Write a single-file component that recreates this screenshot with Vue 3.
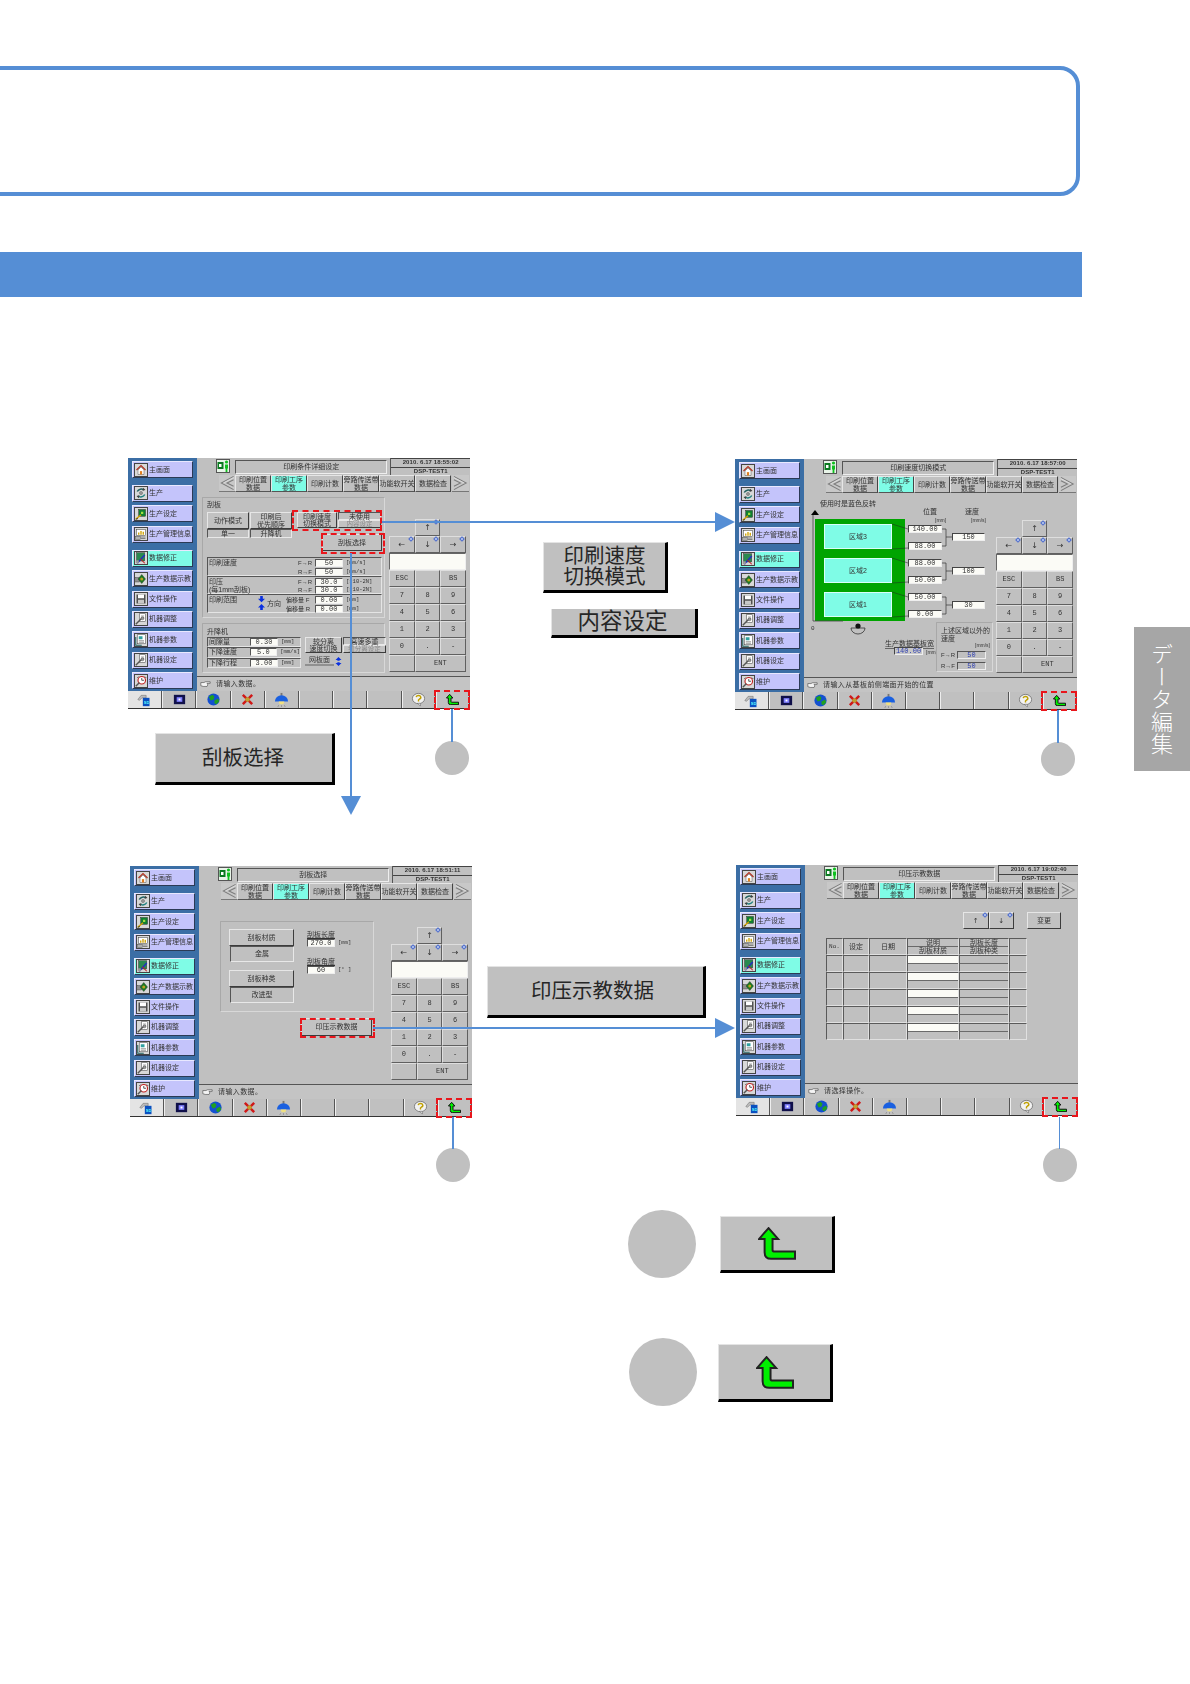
<script setup>
const sideItems = [
  { k: 'home', t: '主画面' },
  { k: 'cycle', t: '生产', sep: true },
  { k: 'chip', t: '生产设定' },
  { k: 'chart', t: '生产管理信息' },
  { k: 'edit', t: '数据修正', sep: true, on: true },
  { k: 'teach', t: '生产数据示教' },
  { k: 'disk', t: '文件操作' },
  { k: 'tool', t: '机器调整' },
  { k: 'sheet', t: '机器参数' },
  { k: 'tool', t: '机器设定' },
  { k: 'clock', t: '维护' }
]
const icons = {
  home: '<path d="M2 8 8 2l6 6" fill="none" stroke="#b03020" stroke-width="1.6"/><path d="M4 8v6h8V8L8 4z" fill="#fff" stroke="#555" stroke-width=".7"/><rect x="6.5" y="9.5" width="3" height="4.5" fill="#e08020"/>',
  cycle: '<path d="M3 6a6 6 0 0 1 9-2" fill="none" stroke="#206060" stroke-width="2"/><path d="M13 10a6 6 0 0 1-9 2" fill="none" stroke="#208080" stroke-width="2"/><path d="M11 1l3 3-4 1zM5 15l-3-3 4-1z" fill="#404040"/><circle cx="8" cy="8" r="2" fill="#a0a0a0" stroke="#444" stroke-width=".6"/>',
  chip: '<rect x="5" y="2" width="9" height="9" fill="#108030" stroke="#222" stroke-width=".6"/><rect x="8" y="5" width="3" height="3" fill="#a0e040"/><path d="M1 15l7-6" stroke="#d0a000" stroke-width="2"/><path d="M1 15l3-1" stroke="#222"/>',
  chart: '<rect x="2" y="2" width="12" height="8" fill="#fff" stroke="#444" stroke-width=".7"/><path d="M5 9V6M8 9V4M11 9V5" stroke="#d0a000" stroke-width="1.8"/><rect x="1" y="11" width="6" height="4" fill="#b0b0b0" stroke="#444" stroke-width=".6"/><path d="M8 12h6M8 14h6" stroke="#666"/>',
  edit: '<rect x="2" y="1" width="11" height="11" fill="#2a8a50" stroke="#333" stroke-width=".6"/><path d="M3 15 13 4" stroke="#2030c0" stroke-width="2"/><path d="M7 9l6 6" stroke="#c02020" stroke-width="1.4"/><rect x="1" y="11" width="4" height="4" fill="#999"/>',
  teach: '<rect x="1" y="6" width="5" height="6" fill="#909090" stroke="#333" stroke-width=".5"/><path d="M9 2 14 8 9 14 4 8z" fill="#1a7a20" stroke="#333" stroke-width=".6"/><circle cx="9" cy="8" r="2" fill="#c0a020"/>',
  disk: '<rect x="2" y="2" width="12" height="12" fill="#505050"/><rect x="4" y="2" width="8" height="5" fill="#fff"/><rect x="4" y="9" width="8" height="5" fill="#c8c8c8"/>',
  tool: '<rect x="6" y="1" width="8" height="10" fill="#fff" stroke="#444" stroke-width=".7"/><path d="M8 4h4M8 6h4" stroke="#888"/><path d="M1 15 9 7" stroke="#555" stroke-width="2"/><circle cx="10" cy="7" r="2" fill="#999" stroke="#333" stroke-width=".5"/>',
  sheet: '<rect x="3" y="1" width="11" height="12" fill="#fff" stroke="#444" stroke-width=".7"/><rect x="5" y="3" width="5" height="4" fill="#30a0a0"/><path d="M5 9h7M5 11h7" stroke="#777"/><path d="M1 4v11h8" fill="none" stroke="#206060" stroke-width="1.4"/>',
  clock: '<circle cx="9" cy="7" r="5" fill="#fff" stroke="#c02020" stroke-width="1.5"/><path d="M9 4v3h3" fill="none" stroke="#222"/><path d="M1 15l5-5" stroke="#555" stroke-width="2"/><path d="M5 2 3 4M13 2l2 2" stroke="#333"/>'
}
const tabs = [
  ['印刷位置', '数据'], ['印刷工序', '参数'], ['印刷计数'], ['旁路传送带', '数据'], ['功能软开关'], ['数据检查']
]
const keys = [
  { t: '', blank: true }, { t: '↑', d: true, arrow: true }, { t: '', blank: true },
  { t: '←', d: true, arrow: true }, { t: '↓', d: true, arrow: true }, { t: '→', d: true, arrow: true },
  { t: '', disp: true },
  { t: 'ESC' }, { t: '' }, { t: 'BS' },
  { t: '7' }, { t: '8' }, { t: '9' },
  { t: '4' }, { t: '5' }, { t: '6' },
  { t: '1' }, { t: '2' }, { t: '3' },
  { t: '0' }, { t: '.' }, { t: '-' },
  { t: '' }, { t: 'ENT', wide: true }
]
const screens = [
  { id: 's1', kind: 'cond', title: '印刷条件详细设定', date: '2010. 6.17 18:55:02', msg: '请输入数据。' },
  { id: 's2', kind: 'speed', title: '印刷速度切换模式', date: '2010. 6.17 18:57:00', msg: '请输入从基板前侧端面开始的位置' },
  { id: 's3', kind: 'blade', title: '刮板选择', date: '2010. 6.17 18:51:11', msg: '请输入数据。' },
  { id: 's4', kind: 'press', title: '印压示教数据', date: '2010. 6.17 19:02:40', msg: '请选择操作。' }
]
const zones = [
  { n: '区域3', a: '140.00', b: '88.00', s: '150', top: 31 },
  { n: '区域2', a: '88.00', b: '50.00', s: '100', top: 65 },
  { n: '区域1', a: '50.00', b: '0.00', s: '30', top: 99 }
]
const rows = [1, 2, 3, 4, 5]
const lines = [
  'hline l1', 'vline l2', 'vline l3', 'vline l4', 'hline l5', 'vline l6', 'vline l7'
]
</script>

<template>
  <div class="page">
    <div class="frame"></div>
    <div class="banner"></div>

    <div v-for="s in screens" :key="s.id" class="screen" :class="s.id">
      <aside class="side">
        <div v-for="(it, i) in sideItems" :key="i" class="sbtn" :class="{ sep: it.sep, on: it.on }">
          <svg class="sico" viewBox="0 0 16 16" v-html="icons[it.k]"></svg>
          <span>{{ it.t }}</span>
        </div>
      </aside>

      <main class="right">
        <header class="head">
          <svg class="door" viewBox="0 0 14 14">
            <rect x=".5" y=".5" width="13" height="13" fill="#e8f4e8" stroke="#555"/>
            <rect x="1.5" y="3" width="6" height="7" fill="#0a7a20"/>
            <rect x="3" y="5" width="2.5" height="3" fill="#fff"/>
            <circle cx="10.5" cy="3" r="1.6" fill="#10c020"/>
            <path d="M9 5.5h3v4h-.6V13h-1.8V9.5H9z" fill="#10c020"/>
          </svg>
          <div class="title">{{ s.title }}</div>
          <div class="stamp">
            <div>{{ s.date }}</div>
            <div>DSP-TEST1</div>
          </div>
        </header>
        <nav class="tabs">
          <svg class="chev" viewBox="0 0 16 17"><path d="M15 1.500 2 8.500 15 15.500M15 5 8 8.500 15 12" fill="none" stroke="#7c7c7c" stroke-width="1.100"/><path d="M15 2.800 4 8.500" stroke="#eee" stroke-width=".6"/></svg>
          <div v-for="(t, i) in tabs" :key="i" class="tab" :class="{ on: i === 1 }">
            <span v-for="l in t" :key="l">{{ l }}</span>
          </div>
          <svg class="chev end" viewBox="0 0 16 17"><path d="M1 1.500 14 8.500 1 15.500M1 5 8 8.500 1 12" fill="none" stroke="#7c7c7c" stroke-width="1.100"/><path d="M1 2.800 12 8.500" stroke="#eee" stroke-width=".6"/></svg>
        </nav>

        <section class="body">
          <!-- screen 1 -->
          <div v-if="s.kind === 'cond'" class="content">
            <div class="panel p1">
              <div class="ptitle">刮板</div>
              <div class="p1top">
                <div class="stack">
                  <div class="btn b42">动作模式</div>
                  <div class="val">单一</div>
                </div>
                <div class="stack">
                  <div class="btn b42 two"><span>印刷后</span><span>优先顺序</span></div>
                  <div class="val">升降机</div>
                </div>
                <div class="redgroup">
                  <div class="pair">
                    <div class="btn b40 two"><span>印刷速度</span><span>切换模式</span></div>
                    <div class="stack narrow">
                      <div class="val flat">未使用</div>
                      <div class="btn half off">内容设定</div>
                    </div>
                  </div>
                  <div class="dash d1"></div>
                  <div class="btn bselect">刮板选择<span class="dash d2"></span></div>
                </div>
              </div>
              <div class="ctable">
                <div class="crow">
                  <div class="clabel">印刷速度</div>
                  <div class="cvals">
                    <div class="cval"><i>F→R</i><b>50</b><em>[mm/s]</em></div>
                    <div class="cval"><i>R→F</i><b>50</b><em>[mm/s]</em></div>
                  </div>
                </div>
                <div class="crow">
                  <div class="clabel">印压<br>(每1mm刮板)</div>
                  <div class="cvals">
                    <div class="cval"><i>F→R</i><b>30.0</b><em>[×10-2N]</em></div>
                    <div class="cval"><i>R→F</i><b>30.0</b><em>[×10-2N]</em></div>
                  </div>
                </div>
                <div class="crow">
                  <div class="clabel">印刷范围</div>
                  <svg class="updown" viewBox="0 0 8 16"><path d="M2.5 0h3v3H8L4 7 0 3h2.500zM4 9l4 4H5.500v3h-3v-3H0z" fill="#0a30e0"/></svg>
                  <div class="dir">方向</div>
                  <div class="cvals">
                    <div class="cval"><i class="wide">偏移量 F</i><b>0.00</b><em>[mm]</em></div>
                    <div class="cval"><i class="wide">偏移量 R</i><b>0.00</b><em>[mm]</em></div>
                  </div>
                </div>
              </div>
            </div>
            <div class="panel p2">
              <div class="ptitle2">升降机</div>
              <div class="p2row">
                <div class="lift">
                  <div class="lrow"><span>间隙量</span><b>0.30</b><em>[mm]</em></div>
                  <div class="lrow"><span>下降速度</span><b>5.0</b><em>[mm/s]</em></div>
                  <div class="lrow"><span>下降行程</span><b>3.00</b><em>[mm]</em></div>
                </div>
                <div class="liftr">
                  <div class="pair">
                    <div class="btn b37 two"><span>较分离</span><span>速度切换</span></div>
                    <div class="stack narrow">
                      <div class="val flat">高速多重</div>
                      <div class="btn half off">缝分离设定</div>
                    </div>
                  </div>
                  <div class="mesh">
                    <div class="meshl">网板面</div>
                    <svg class="updown small" viewBox="0 0 8 12"><path d="M4 0l4 4H5.500v1h-3V4H0zM2.500 7h3v1H8l-4 4-4-4h2.500z" fill="#0a30e0"/></svg>
                  </div>
                </div>
              </div>
            </div>
          </div>

          <!-- screen 2 -->
          <div v-else-if="s.kind === 'speed'" class="canvas">
            <div class="lbl l-use">使用时是蓝色反转</div>
            <div class="lbl l-pos">位置</div>
            <div class="lbl l-pos2">[mm]</div>
            <div class="lbl l-spd">速度</div>
            <div class="lbl l-spd2">[mm/s]</div>
            <svg class="wires" viewBox="0 0 192 183">
              <path d="M7 22 11 17l4 5z" fill="#000"/>
              <path d="M9 22v106M9 128h30" stroke="#444" stroke-width=".8" fill="none"/>
              <g stroke="#222" stroke-width=".5" fill="none">
                <path d="M88 31l16 5M88 56l16 -1M88 65l16 5M88 90l16 -1M88 99l16 5M88 124l16 -1"/>
                <path d="M138 36h4v17h-4M142 44h6M138 70h4v17h-4M142 78h6M138 104h4v17h-4M142 112h6" stroke="#333" stroke-width=".7"/>
              </g>
              <path d="M47 135a7 6 0 0 0 14 0z" fill="none" stroke="#333" stroke-width=".8"/>
              <circle cx="54" cy="133" r="2.600" fill="#111"/>
              <text x="7" y="137" font-size="6" fill="#333" font-family="Liberation Mono">0</text>
            </svg>
            <div class="greenblock"></div>
            <template v-for="z in zones" :key="z.n">
              <div class="zone" :style="{ top: z.top + 'px' }">{{ z.n }}</div>
              <div class="zin" :style="{ top: z.top + 1 + 'px' }">{{ z.a }}</div>
              <div class="zin" :style="{ top: z.top + 18 + 'px' }">{{ z.b }}</div>
              <div class="zsp" :style="{ top: z.top + 9 + 'px' }">{{ z.s }}</div>
            </template>
            <div class="lbl l-w">生产数据基板宽</div>
            <div class="zin blue w2">140.00</div>
            <div class="lbl l-wm">[mm]</div>
            <div class="panel outer">
              <div class="outerT">上述区域以外的<br>速度</div>
              <div class="outerU">[mm/s]</div>
              <div class="orow"><i>F→R</i><b>50</b></div>
              <div class="orow"><i>R→F</i><b>50</b></div>
            </div>
          </div>

          <!-- screen 3 -->
          <div v-else-if="s.kind === 'blade'" class="content">
            <div class="panel bladeP">
              <div class="bcol">
                <div class="btn bw">刮板材质</div>
                <div class="val bv">金属</div>
                <div class="btn bw gaptop">刮板种类</div>
                <div class="val bv">改进型</div>
              </div>
              <div class="bright">
                <div class="u">刮板长度</div>
                <div class="bin"><b>270.0</b><em>[mm]</em></div>
                <div class="u mt">刮板角度</div>
                <div class="bin"><b>60</b><em>[° ]</em></div>
              </div>
            </div>
            <div class="btn bpress">印压示教数据<span class="dash d3"></span></div>
          </div>

          <!-- screen 4 -->
          <div v-else class="content4">
            <div class="topbtns">
              <div class="btn hk">↑<span class="dia"></span></div>
              <div class="btn hk">↓<span class="dia"></span></div>
              <div class="btn hchg">变更</div>
            </div>
            <div class="tbl">
              <div class="tc th c1">No.</div>
              <div class="tc th c2">设定</div>
              <div class="tc th c3">日期</div>
              <div class="tc c4 split"><span>说明</span><span>刮板材质</span></div>
              <div class="tc c5 split"><span>刮板长度</span><span>刮板种类</span></div>
              <div class="tc c6"></div>
              <template v-for="r in rows" :key="r">
                <div class="tc c1"></div>
                <div class="tc c2"></div>
                <div class="tc c3"></div>
                <div class="tc c4 split"><span class="white"></span><span></span></div>
                <div class="tc c5 split"><span></span><span></span></div>
                <div class="tc c6"></div>
              </template>
            </div>
          </div>

          <div v-if="s.kind !== 'press'" class="keypad">
            <div v-for="(k, i) in keys" :key="i" class="key"
              :class="{ blank: k.blank, disp: k.disp, wide: k.wide, arrow: k.arrow }">
              {{ k.t }}<span v-if="k.d" class="dia"></span>
            </div>
          </div>
        </section>

        <div class="msg">
          <svg class="hand" viewBox="0 0 14 9"><path d="M1 2h4l2-1h6v2H9l1 2-1 2H4L1 6z" fill="#f4f4f4" stroke="#333" stroke-width=".7"/></svg>
          <span>{{ s.msg }}</span>
        </div>
      </main>

      <footer class="bar">
        <div class="cell first">
          <svg viewBox="0 0 18 16" class="bico">
            <path d="M1 8 5 3h6v3H6L3 9z" fill="#bbb" stroke="#555" stroke-width=".5"/>
            <rect x="7" y="6" width="8" height="10" fill="#0a50c0"/>
            <text x="8" y="14" font-size="5" fill="#5ff" font-family="Liberation Sans" font-weight="700">SD</text>
          </svg>
        </div>
        <div class="cell"><svg viewBox="0 0 16 16" class="bico"><rect x="2" y="3" width="12" height="10" fill="#10104a"/><rect x="5" y="5.500" width="6" height="5" fill="#8080ff"/><rect x="7" y="7" width="2" height="2" fill="#fff"/></svg></div>
        <div class="cell"><svg viewBox="0 0 16 16" class="bico"><circle cx="8" cy="8" r="6.500" fill="#1450d0"/><path d="M3 5l4-2 2 2-1 3-3 1zM9 9l4-2 1 3-3 3-2-1z" fill="#20a020"/></svg></div>
        <div class="cell"><svg viewBox="0 0 16 16" class="bico"><path d="M3 3l10 10M13 3 3 13" stroke="#d01818" stroke-width="2.600"/><circle cx="8" cy="8" r="2.500" fill="#c0a030"/></svg></div>
        <div class="cell"><svg viewBox="0 0 16 16" class="bico"><rect x="7" y="1" width="2" height="3" fill="#777"/><path d="M1 10a7 6.500 0 0 1 14 0z" fill="#1a60e0"/><path d="M5 10h6l-1 3H6z" fill="#f0e080"/><path d="M5 14l-1 2M8 14v2M11 14l1 2" stroke="#777" stroke-width=".6"/></svg></div>
        <div class="cell"></div>
        <div class="cell"></div>
        <div class="cell"></div>
        <div class="cell"><svg viewBox="0 0 16 16" class="bico"><ellipse cx="8" cy="7" rx="6.500" ry="5.500" fill="#f2f2f2" stroke="#666" stroke-width=".8"/><path d="M7 12h3v3z" fill="#f2f2f2" stroke="#666" stroke-width=".6"/><path d="M5.500 5.500a2.500 2 0 1 1 3.500 2L8 8.500V10" fill="none" stroke="#c0a000" stroke-width="1.500"/></svg></div>
        <div class="cell">
          <svg viewBox="-3 -3 115 99" class="ret-s"><path d="M29 0 58 33H41V66Q41 71 48 71H109V93H37Q17 93 17 73V33H0Z" fill="#00f000" stroke="#111" stroke-width="9"/></svg>
        </div>
      </footer>
      <div class="dash d-ret"></div>
    </div>

    <div v-for="l in lines" :key="l" :class="l"></div>
    <div class="head-r r1"></div>
    <div class="head-r r2"></div>
    <div class="head-d"></div>

    <div class="dot c1p"></div>
    <div class="dot c2p"></div>
    <div class="dot c3p"></div>
    <div class="dot c4p"></div>
    <div class="dot big c5p"></div>
    <div class="dot big c6p"></div>

    <div class="call a">刮板选择</div>
    <div class="call b two-l"><span>印刷速度</span><span>切换模式</span></div>
    <div class="call c">内容设定</div>
    <div class="call d">印压示教数据</div>
    <div class="call e1">
      <svg viewBox="-3 -3 115 99" class="ret-b"><path d="M29 0 58 33H41V66Q41 71 48 71H109V93H37Q17 93 17 73V33H0Z" fill="#00f000" stroke="#222" stroke-width="6"/></svg>
    </div>
    <div class="call e2">
      <svg viewBox="-3 -3 115 99" class="ret-b"><path d="M29 0 58 33H41V66Q41 71 48 71H109V93H37Q17 93 17 73V33H0Z" fill="#00f000" stroke="#222" stroke-width="6"/></svg>
    </div>

    <div class="sidetab">データ編集</div>
  </div>
</template>

<style scoped>
.page {
  position: relative;
  width: 1190px;
  height: 1684px;
  overflow: hidden;
  background: #fff;
  font-family: "Liberation Sans", "Noto Sans CJK SC", sans-serif;
}
.frame {
  position: absolute;
  left: -30px;
  top: 66px;
  width: 1110px;
  height: 130px;
  box-sizing: border-box;
  border: 4px solid #558ed5;
  border-radius: 20px;
}
.banner {
  position: absolute;
  left: 0;
  top: 252px;
  width: 1082px;
  height: 45px;
  background: #558ed5;
}

/* ---------- machine screens ---------- */
.screen {
  position: absolute;
  width: 342px;
  height: 251px;
  display: grid;
  grid-template-columns: 69px 273px;
  grid-template-rows: 233px 18px;
  background: #c0c0c0;
  color: #333;
  font-size: 7px;
  line-height: 8px;
  filter: blur(0.3px);
}
.s1 { left: 128px; top: 458px; }
.s2 { left: 735px; top: 459px; }
.s3 { left: 130px; top: 866px; }
.s4 { left: 736px; top: 865px; }

.side {
  background: #3b6ea5;
  padding: 3px 0 0 4px;
  display: flex;
  flex-direction: column;
  gap: 3.4px;
}
.sbtn {
  box-sizing: border-box;
  width: 61px;
  height: 17px;
  background: #c4c4fb;
  border: 1px solid;
  border-color: #e8e8ff #2b3a55 #2b3a55 #e8e8ff;
  display: flex;
  align-items: center;
  gap: 1px;
  white-space: nowrap;
}
.sbtn.sep { margin-top: 3.6px; }
.sbtn.on { background: #7ffce6; }
.sico {
  flex: none;
  width: 14px;
  height: 14px;
  background: #d8d8d8;
  border: 1px solid #444;
  box-sizing: border-box;
  margin-left: 1px;
}

.right { display: flex; flex-direction: column; min-width: 0; }
.head { height: 17px; display: flex; align-items: flex-start; padding-left: 19px; }
.door { width: 14px; height: 14px; margin-top: 1px; flex: none; }
.title {
  box-sizing: border-box;
  width: 153px;
  height: 14px;
  margin: 2px 0 0 5px;
  border: 1px solid;
  border-color: #555 #eee #eee #555;
  text-align: center;
  line-height: 12px;
}
.stamp {
  width: 79px;
  margin-left: 3px;
  font: 700 6px/7px "Liberation Sans", sans-serif;
  text-align: center;
  border-left: 1px solid #555;
  letter-spacing: .1px;
}
.stamp div { height: 7.500px; border-top: 1px solid #444; }

.tabs { height: 17px; display: flex; padding-left: 22px; }
.chev { width: 16px; height: 17px; flex: none; background: #c8c8c8; border-bottom: 1px solid #777; box-sizing: border-box; }
.chev.end { width: 17px; margin-left: 1px; }
.tab {
  box-sizing: border-box;
  width: 36px;
  height: 17px;
  display: flex;
  flex-direction: column;
  align-items: center;
  justify-content: center;
  background: #c0c0c0;
  border: 1px solid;
  border-color: #e6e6e6 #444 #555 #e6e6e6;
  line-height: 7.500px;
  white-space: nowrap;
}
.tab.on { background: #7ffce6; }

.body { height: 184px; display: flex; position: relative; }
.content { width: 192px; flex: none; position: relative; }
.canvas { width: 192px; flex: none; position: relative; }
.keypad {
  width: 77px;
  margin-top: 27px;
  height: 153px;
  display: grid;
  grid-template-columns: repeat(3, 1fr);
  grid-auto-rows: 17px;
  font: 7px/15px "Liberation Mono", monospace;
}
.key {
  position: relative;
  box-sizing: border-box;
  border: 1px solid;
  border-color: #dedede #606060 #606060 #dedede;
  text-align: center;
}
.key.arrow { font: 8px/15px "DejaVu Sans", sans-serif; }
.key.blank { border-color: transparent; }
.key.disp { grid-column: 1 / 4; background: #fbfbf6; border-color: #666 #eee #eee #666; }
.key.wide { grid-column: span 2; }
.dia {
  position: absolute;
  top: 1px;
  right: 2px;
  width: 2px;
  height: 2px;
  background: #b4c8f2;
  outline: .5px solid #4a6ad0;
  transform: rotate(45deg);
}

.msg {
  box-sizing: border-box;
  height: 15px;
  margin-top: 0;
  border-top: 1px solid #555;
  display: flex;
  align-items: center;
  padding-left: 3px;
  gap: 5px;
  background: #c4c4c4;
  letter-spacing: .4px;
}
.hand { width: 11px; height: 7px; }

.bar { grid-column: 1 / 3; display: grid; grid-template-columns: repeat(10, 1fr); border-bottom: 1px solid #333; box-sizing: border-box; }
.cell { display: flex; align-items: center; justify-content: center; border-right: 1px solid #555; border-left: 1px solid #eee; box-sizing: border-box; }
.cell.first { background: #e4e4e4; border-left: 0; }
.bico { width: 15px; height: 15px; }
.ret-s { width: 13px; height: 11px; }

.dash {
  position: absolute;
  border: 2px dashed #e8161c;
  box-sizing: border-box;
  pointer-events: none;
}
.d-ret { left: 306px; top: 232px; width: 36px; height: 20px; }
.d1 { left: -5px; top: -2px; width: 90px; height: 21px; }
.d2 { left: -2px; top: -2px; width: 64px; height: 21px; }
.d3 { left: -2px; top: -1px; width: 75px; height: 20px; }

.panel {
  box-sizing: border-box;
  border: 1px solid;
  border-color: #a8a8a8 #d8d8d8 #d8d8d8 #a8a8a8;
  border-radius: 1px;
}
.btn {
  position: relative;
  box-sizing: border-box;
  background: #c2c2c2;
  border: 1px solid;
  border-color: #e6e6e6 #3c3c3c #3c3c3c #e6e6e6;
  display: flex;
  flex-direction: column;
  align-items: center;
  justify-content: center;
  white-space: nowrap;
}
.two { line-height: 7.200px; }
.val {
  box-sizing: border-box;
  height: 9px;
  border: 1px solid;
  border-color: #555 #e8e8e8 #e8e8e8 #555;
  text-align: center;
  line-height: 7px;
}
.val.flat { height: 8px; }

/* screen 1 */
.p1 { position: relative; width: 183px; height: 121px; margin: 5px 0 0 5px; padding: 0 4px; }
.ptitle { height: 14px; padding-top: 3px; box-sizing: border-box; }
.p1top { display: flex; height: 45px; gap: 1px; position: relative; }
.stack { display: flex; flex-direction: column; }
.b42 { width: 42px; height: 17px; }
.b40 { width: 40px; height: 16px; }
.b37 { width: 37px; height: 16px; }
.narrow { width: 43px; margin-left: 1px; }
.half { height: 8px; width: 100%; font-size: 6.500px; line-height: 6px; }
.off { color: #8a8a8a; }
.redgroup { position: relative; margin-left: 4px; width: 90px; display: flex; flex-direction: column; }
.pair { display: flex; }
.bselect { width: 60px; height: 17px; margin: 6px 0 0 25px; }
.ctable { margin-top: 0; width: 175px; }
.crow {
  box-sizing: border-box;
  height: 18.600px;
  display: flex;
  align-items: flex-start;
  padding: 1px 0 0 1px;
  border: 1px solid;
  border-color: #555 #e4e4e4 #e4e4e4 #555;
}
.clabel { flex: 1; white-space: nowrap; }
.updown { width: 7px; height: 14px; margin-right: 2px; }
.updown.small { width: 7px; height: 9px; margin: 0; }
.dir { width: 16px; margin: 4px 0 0 0; }
.crow:last-child .clabel { flex: none; width: 49px; }
.cvals { width: 83px; margin-left: auto; }
.crow:last-child .cvals { width: 95px; }
.cval { display: flex; height: 8.500px; align-items: center; }
.cval i { font-style: normal; width: 14px; margin-right: 3px; white-space: nowrap; font-size: 6px; }
.crow:last-child .cval i { width: 26px; }
.cval b, .lrow b, .bin b, .orow b {
  box-sizing: border-box;
  font: 400 7px/7px "Liberation Mono", monospace;
  text-align: center;
  background: #fbfbf6;
  border: 1px solid;
  border-color: #555 #eee #eee #555;
  height: 8px;
}
.cval b { width: 28px; }
.cval em, .lrow em, .bin em { font: 5.500px/8px "Liberation Mono", monospace; margin-left: 3px; white-space: nowrap; }

.p2 { width: 183px; height: 50px; margin: 5px 0 0 5px; padding: 0 4px; }
.ptitle2 { height: 13px; padding-top: 4px; box-sizing: border-box; }
.p2row { display: flex; gap: 4px; }
.lift { width: 94px; }
.lrow {
  box-sizing: border-box;
  height: 10.300px;
  display: flex;
  align-items: center;
  padding-left: 1px;
  border: 1px solid;
  border-color: #555 #e4e4e4 #e4e4e4 #555;
}
.lrow span { width: 41px; }
.lrow b { width: 28px; background: #fbfbf6; }
.liftr { flex: 1; }
.mesh { display: flex; align-items: flex-end; margin-top: 3px; gap: 1px; }
.meshl { width: 29px; text-align: center; border-bottom: 2px solid #909090; line-height: 7px; padding-bottom: 1px; }

/* screen 2 */
.lbl { position: absolute; white-space: nowrap; }
.l-use { left: 16px; top: 7px; }
.l-pos { left: 119px; top: 15px; }
.l-pos2 { left: 131px; top: 23px; font-size: 5px; }
.l-spd { left: 161px; top: 15px; }
.l-spd2 { left: 167px; top: 23px; font-size: 5px; }
.l-w { left: 81px; top: 147px; border-bottom: 1px solid #666; }
.l-wm { left: 122px; top: 155px; font-size: 5px; }
.wires { position: absolute; left: 0; top: 0; width: 192px; height: 183px; z-index: 1; }
.greenblock { position: absolute; left: 11px; top: 26px; width: 90px; height: 102px; background: #00a400; }
.zone {
  position: absolute;
  left: 20px;
  width: 68px;
  height: 25px;
  box-sizing: border-box;
  background: #7ffce6;
  border: 1px solid #d8fff8;
  text-align: center;
  line-height: 23px;
  z-index: 2;
}
.zin, .zsp {
  position: absolute;
  box-sizing: border-box;
  height: 8px;
  background: #fbfbf6;
  border: 1px solid;
  border-color: #444 #eee #eee #444;
  font: 7px/7px "Liberation Mono", monospace;
  text-align: center;
  z-index: 2;
}
.zin { left: 104px; width: 34px; }
.zsp { left: 148px; width: 33px; }
.zin.blue { left: 90px; top: 154px; width: 29px; color: #3040b0; background: #c8c8c8; }
.outer { position: absolute; left: 132px; top: 129px; width: 57px; height: 50px; padding: 4px 0 0 4px; }
.outerT { line-height: 7.500px; }
.outerU { font-size: 5px; text-align: right; padding-right: 2px; line-height: 7px; }
.orow { display: flex; align-items: center; height: 10px; font-size: 6px; margin-top: 1px; }
.orow i { font-style: normal; width: 16px; white-space: nowrap; }
.orow b { width: 29px; background: #c0c0c0; color: #3040b0; }

/* screen 3 */
.bladeP { display: flex; width: 154px; height: 91px; margin: 21px 0 0 21px; padding: 7px 0 0 8px; }
.bcol { width: 65px; }
.bw { width: 65px; height: 17px; }
.bv { height: 16px; line-height: 14px; width: 64px; margin-left: 1px; }
.gaptop { margin-top: 8px; }
.bright { margin-left: 13px; padding-top: 2px; }
.u { text-decoration: underline; height: 8px; white-space: nowrap; }
.u.mt { margin-top: 11px; }
.bin { display: flex; align-items: center; }
.bin b { width: 28px; height: 8px; }
.bpress { width: 71px; height: 18px; margin: 6px 0 0 102px; }

/* screen 4 */
.content4 { flex: 1; padding: 13px 0 0 21px; box-sizing: border-box; }
.topbtns { display: flex; height: 17px; margin-bottom: 9px; padding-left: 137px; }
.hk { width: 25.500px; height: 17px; font-family: "DejaVu Sans", sans-serif; }
.hchg { width: 34px; height: 17px; margin-left: 13px; }
.tbl {
  display: grid;
  width: 201px;
  grid-template-columns: 17px 26px 38px 52px 50px 18px;
  grid-auto-rows: 17px;
}
.tc {
  box-sizing: border-box;
  border: 1px solid;
  border-color: #5a5a5a #e0e0e0 #e0e0e0 #5a5a5a;
}
.th { text-align: center; line-height: 15px; }
.tc.c1.th { font: 6px/15px "Liberation Mono", monospace; }
.split { display: flex; flex-direction: column; }
.split span { flex: 1; border-bottom: 1px solid #6a6a6a; text-align: center; line-height: 7px; white-space: nowrap; }
.split span:last-child { border-bottom: 0; }
.split .white { background: #fbfbf6; }

/* ---------- page furniture ---------- */
.hline, .vline { position: absolute; background: #558ed5; z-index: 3; }
.l1 { left: 382px; top: 521px; width: 334px; height: 2px; }
.l2 { left: 350px; top: 553px; width: 2px; height: 245px; }
.l3 { left: 451px; top: 709px; width: 2px; height: 33px; }
.l4 { left: 1057px; top: 710px; width: 2px; height: 33px; }
.l5 { left: 373px; top: 1027px; width: 343px; height: 2px; }
.l6 { left: 452px; top: 1117px; width: 2px; height: 32px; }
.l7 { left: 1059px; top: 1117px; width: 1px; height: 32px; }
.head-r {
  position: absolute;
  left: 715px;
  width: 0;
  height: 0;
  border-left: 20px solid #558ed5;
  border-top: 10px solid transparent;
  border-bottom: 10px solid transparent;
  z-index: 3;
}
.r1 { top: 512px; }
.r2 { top: 1018px; }
.head-d {
  position: absolute;
  left: 341px;
  top: 796px;
  width: 0;
  height: 0;
  border-top: 19px solid #558ed5;
  border-left: 10px solid transparent;
  border-right: 10px solid transparent;
  z-index: 3;
}
.dot { position: absolute; width: 34px; height: 34px; border-radius: 50%; background: #c0c0c0; }
.dot.big { width: 68px; height: 68px; }
.c1p { left: 435px; top: 741px; }
.c2p { left: 1041px; top: 742px; }
.c3p { left: 436px; top: 1148px; }
.c4p { left: 1043px; top: 1148px; }
.c5p { left: 628px; top: 1210px; }
.c6p { left: 629px; top: 1338px; }

.call {
  position: absolute;
  box-sizing: border-box;
  background: #c0c0c0;
  border-style: solid;
  border-width: 1px 3px 3px 1px;
  border-color: #e4e4e4 #000 #000 #e4e4e4;
  display: flex;
  flex-direction: column;
  align-items: center;
  justify-content: center;
  color: #262626;
  white-space: nowrap;
  font-size: 20.500px;
  line-height: 21px;
}
.a { left: 155px; top: 733px; width: 180px; height: 52px; padding: 0 2px 2px 0; }
.b { left: 543px; top: 542px; width: 125px; height: 51px; padding-bottom: 2px; font-size: 20.500px; }
.c { left: 551px; top: 609px; width: 147px; height: 29px; border-top-width: 0; padding: 0 2px 1px 0; font-size: 22.500px; }
.d { left: 487px; top: 966px; width: 219px; height: 52px; padding: 0 6px 2px 0; font-size: 20.500px; }
.e1 { left: 720px; top: 1216px; width: 115px; height: 57px; }
.e2 { left: 718px; top: 1344px; width: 115px; height: 58px; }
.ret-b { width: 38px; height: 33px; }

.sidetab {
  position: absolute;
  left: 1134px;
  top: 627px;
  width: 56px;
  height: 144px;
  background: #a6a6a6;
  color: #fff;
  display: flex;
  align-items: center;
  justify-content: center;
  writing-mode: vertical-rl;
  font-family: "Noto Sans CJK JP", sans-serif;
  font-weight: 300;
  font-size: 22px;
  letter-spacing: .5px;
}
</style>
